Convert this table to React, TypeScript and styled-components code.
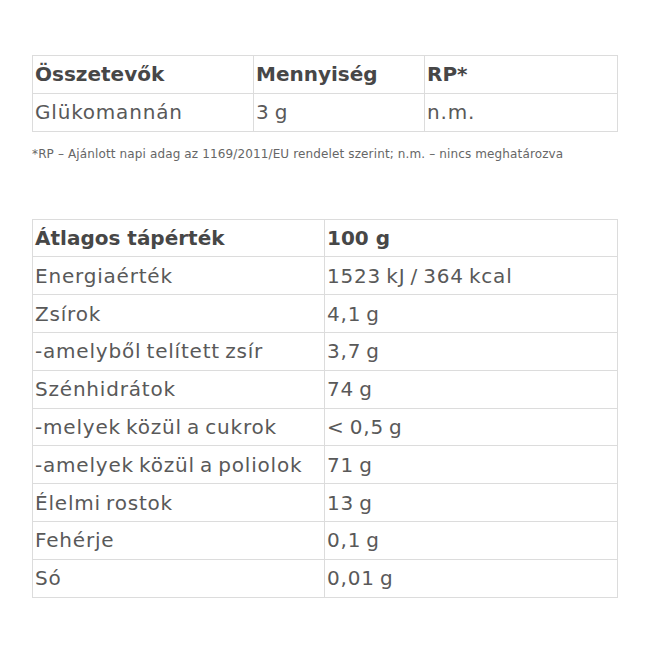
import React from "react";
import styled, { createGlobalStyle } from "styled-components";

const Global = createGlobalStyle`
  html, body { margin: 0; padding: 0; background: #fff; }
  body { font-family: "DejaVu Sans", "Open Sans", sans-serif; }
`;

const Page = styled.div`
  width: 650px;
  padding: 55px 33px 0 32px;
  box-sizing: border-box;
  display: flex;
  flex-direction: column;
`;

const Table = styled.table`
  width: 585px;
  border-collapse: collapse;
  table-layout: fixed;
  color: #555;
  font-size: 20px;
`;

const Cell = styled.td<{ $bold?: boolean }>`
  border: 1px solid #dcdcdc;
  height: 37.8px;
  padding: 0 2px;
  box-sizing: border-box;
  vertical-align: middle;
  white-space: nowrap;
  font-weight: ${(p) => (p.$bold ? 700 : 400)};
  letter-spacing: ${(p) => (p.$bold ? "0px" : "0.8px")};
  word-spacing: ${(p) => (p.$bold ? "0px" : "-2px")};
  color: ${(p) => (p.$bold ? "#474747" : "#595959")};
`;

const Note = styled.p`
  margin: 15px 0 0 0;
  font-size: 12px;
  color: #666;
  letter-spacing: 0.13px;
  height: 72px;
`;

const rows2: [string, string][] = [
  ["Energiaérték", "1523 kJ / 364 kcal"],
  ["Zsírok", "4,1 g"],
  ["-amelyből telített zsír", "3,7 g"],
  ["Szénhidrátok", "74 g"],
  ["-melyek közül a cukrok", "< 0,5 g"],
  ["-amelyek közül a poliolok", "71 g"],
  ["Élelmi rostok", "13 g"],
  ["Fehérje", "0,1 g"],
  ["Só", "0,01 g"],
];

export default function App() {
  return (
    <Page>
      <Global />
      <Table>
        <colgroup>
          <col style={{ width: 221 }} />
          <col style={{ width: 171 }} />
          <col style={{ width: 193 }} />
        </colgroup>
        <tbody>
          <tr>
            <Cell $bold>Összetevők</Cell>
            <Cell $bold>Mennyiség</Cell>
            <Cell $bold>RP*</Cell>
          </tr>
          <tr>
            <Cell>Glükomannán</Cell>
            <Cell>3 g</Cell>
            <Cell>n.m.</Cell>
          </tr>
        </tbody>
      </Table>
      <Note>*RP – Ajánlott napi adag az 1169/2011/EU rendelet szerint; n.m. – nincs meghatározva</Note>
      <Table>
        <colgroup>
          <col style={{ width: 292 }} />
          <col style={{ width: 293 }} />
        </colgroup>
        <tbody>
          <tr>
            <Cell $bold>Átlagos tápérték</Cell>
            <Cell $bold>100 g</Cell>
          </tr>
          {rows2.map(([a, b]) => (
            <tr key={a}>
              <Cell>{a}</Cell>
              <Cell>{b}</Cell>
            </tr>
          ))}
        </tbody>
      </Table>
    </Page>
  );
}
